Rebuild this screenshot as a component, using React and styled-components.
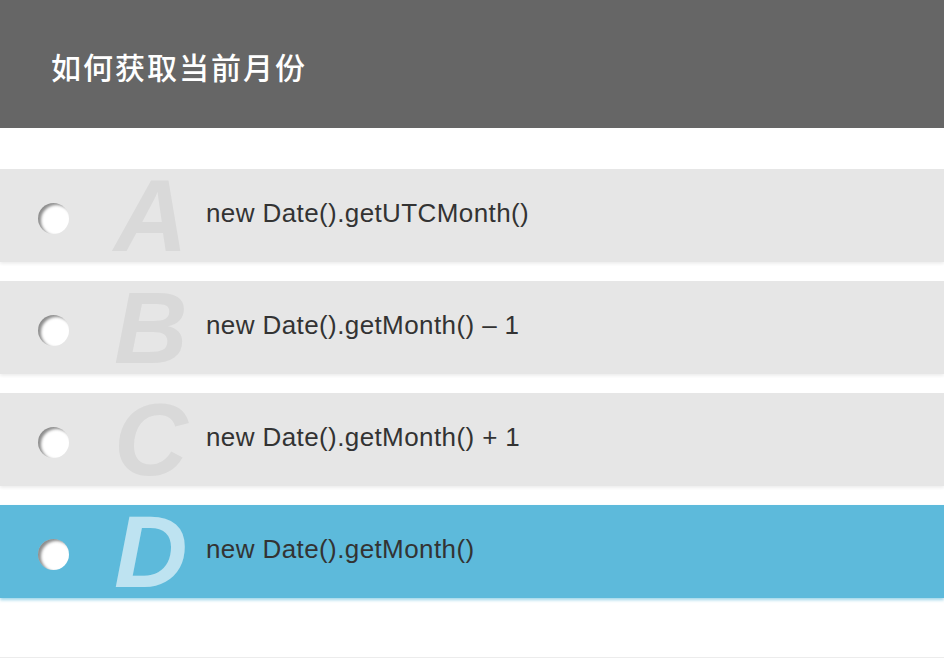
import React, { useState } from 'react';
import styled, { createGlobalStyle } from 'styled-components';

const GlobalStyle = createGlobalStyle`
  html, body {
    margin: 0;
    padding: 0;
    background: #fff;
  }
  * {
    box-sizing: border-box;
  }
`;

const StyledPage = styled.div`
  height: 658px;
  border-bottom: 1px solid #ececec;
  overflow: hidden;
`;

const StyledHeader = styled.div`
  height: 128px;
  background-color: #666666;
  display: flex;
  align-items: center;
  padding-left: 51px;
`;

const StyledTitle = styled.h1`
  margin: 0;
  color: #fff;
  font-family: 'Noto Sans CJK SC', 'Noto Sans', sans-serif;
  font-size: 30px;
  font-weight: 500;
  letter-spacing: 2px;
  padding-top: 4px;
`;

const StyledList = styled.div`
  display: flex;
  flex-direction: column;
  row-gap: 19px;
  padding-top: 41px;
`;

const StyledOption = styled.div`
  height: 93px;
  display: flex;
  align-items: center;
  background-color: ${p => (p.$active ? '#5dbadb' : '#e6e6e6')};
  box-shadow: 0 2px 3px ${p => (p.$active ? 'rgba(93, 186, 219, 0.6)' : 'rgba(0, 0, 0, 0.07)')};
  cursor: pointer;
`;

const StyledRadio = styled.span`
  flex: none;
  width: 31px;
  height: 31px;
  margin-left: 38px;
  margin-top: 5px;
  border-radius: 50%;
  background-color: #fff;
  box-shadow: inset 3px 2px 3px rgba(0, 0, 0, 0.45);
`;

const StyledLetter = styled.span`
  flex: none;
  width: 137px;
  height: 93px;
  padding-left: 45px;
  font-family: 'Liberation Sans', Arial, sans-serif;
  font-size: 102px;
  font-weight: 700;
  font-style: italic;
  line-height: 95px;
  color: ${p => (p.$active ? 'rgba(255, 255, 255, 0.6)' : '#d9d9d9')};
  user-select: none;
`;

const StyledText = styled.span`
  font-family: 'Liberation Sans', Arial, sans-serif;
  font-size: 26px;
  letter-spacing: 0.4px;
  color: #333;
  margin-top: -5px;
`;

const options = [
  { key: 'A', text: 'new Date().getUTCMonth()' },
  { key: 'B', text: 'new Date().getMonth() – 1' },
  { key: 'C', text: 'new Date().getMonth() + 1' },
  { key: 'D', text: 'new Date().getMonth()' },
];

export default function App() {
  const [active, setActive] = useState('D');

  return (
    <StyledPage>
      <GlobalStyle />
      <StyledHeader>
        <StyledTitle>如何获取当前月份</StyledTitle>
      </StyledHeader>
      <StyledList>
        {options.map(o => (
          <StyledOption
            key={o.key}
            $active={active === o.key}
            onClick={() => setActive(o.key)}
          >
            <StyledRadio />
            <StyledLetter $active={active === o.key}>{o.key}</StyledLetter>
            <StyledText>{o.text}</StyledText>
          </StyledOption>
        ))}
      </StyledList>
    </StyledPage>
  );
}
